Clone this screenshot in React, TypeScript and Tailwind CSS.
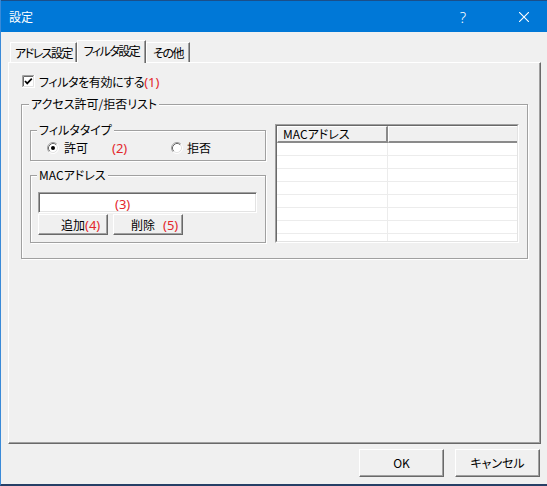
import React from "react";

const raised =
  "border border-t-white border-l-white border-r-[#696969] border-b-[#696969] shadow-[inset_-1px_-1px_0_#a0a0a0]";
const group =
  "relative border border-[#a0a0a0] shadow-[inset_1px_1px_0_#fff,1px_1px_0_#fff]";
const legend =
  "absolute -top-[8px] bg-[#f0f0f0] px-[2px] leading-[14px] whitespace-nowrap";
const red = "text-[#e3262b] font-['Noto_Sans',sans-serif] text-[13px] leading-[14px]";
const tabText = "text-[12px] tracking-[-1.5px]";

function CheckBox() {
  return (
    <svg width="13" height="13" viewBox="0 0 13 13" className="shrink-0">
      <rect x="0" y="0" width="13" height="13" fill="#fff" />
      <path d="M0.5 12V0.5H12" fill="none" stroke="#a0a0a0" />
      <path d="M1.5 11V1.5H11" fill="none" stroke="#696969" />
      <path d="M0 12.5H12.5V0" fill="none" stroke="#fff" />
      <path d="M1 11.5H11.5V1" fill="none" stroke="#e3e3e3" />
      <path d="M3 6L5.2 8.4L9.8 3.6" fill="none" stroke="#000" strokeWidth="1.7" />
    </svg>
  );
}

function Radio({ checked }: { checked?: boolean }) {
  return (
    <svg width="12" height="12" viewBox="0 0 12 12" className="shrink-0">
      <circle cx="6" cy="6" r="5" fill="#fff" />
      <path d="M2.11 9.89A5.5 5.5 0 0 1 9.89 2.11" fill="none" stroke="#a0a0a0" />
      <path d="M9.89 2.11A5.5 5.5 0 0 1 2.11 9.89" fill="none" stroke="#ffffff" />
      <path d="M2.82 9.18A4.5 4.5 0 0 1 9.18 2.82" fill="none" stroke="#696969" />
      <path d="M9.18 2.82A4.5 4.5 0 0 1 2.82 9.18" fill="none" stroke="#e3e3e3" />
      {checked && <circle cx="6" cy="6" r="2" fill="#000" />}
    </svg>
  );
}

export default function App() {
  const rows = [0, 1, 2, 3, 4, 5, 6, 7];
  return (
    <div className="w-[547px] h-[486px] bg-[#f0f0f0] flex flex-col border-l border-l-[#3a8ad8] border-b-2 border-b-[#263f66] overflow-hidden whitespace-nowrap text-[12px] leading-[14px] text-black font-['Noto_Sans_CJK_JP',sans-serif] [font-feature-settings:'palt']">
      {/* title bar */}
      <div className="h-[32px] shrink-0 bg-[#0078d7] border-t border-t-[#1a4f8a] flex items-center text-white">
        <span className="ml-[8px]">設定</span>
        <span className="ml-auto mr-[35px] font-['Noto_Sans',sans-serif] text-[15px] leading-[16px] font-light">?</span>
        <div className="w-[46px] h-full flex items-center justify-center">
          <svg width="10" height="10" viewBox="0 0 10 10">
            <path d="M0 0L10 10M10 0L0 10" stroke="#fff" strokeWidth="1.1" />
          </svg>
        </div>
      </div>

      {/* body */}
      <div className="flex-1 flex flex-col pl-[7px] pr-[6px] pt-[8px]">
        {/* tabs */}
        <div className="h-[22px] shrink-0 flex items-end pl-[2px]">
          <div className={`w-[67px] h-[20px] border-t border-l border-white border-r border-r-[#696969] shadow-[inset_-1px_0_0_#a0a0a0] flex items-center justify-center ${tabText}`}>
            アドレス設定
          </div>
          <div className={`w-[69px] h-[23px] -mb-px relative z-10 bg-[#f0f0f0] border-t border-l border-white border-r border-r-[#696969] shadow-[inset_-1px_0_0_#a0a0a0] flex justify-center pt-[3px] ${tabText}`}>
            フィルタ設定
          </div>
          <div className={`w-[44px] h-[20px] border-t border-l border-white border-r border-r-[#696969] shadow-[inset_-1px_0_0_#a0a0a0] flex items-center justify-center ${tabText}`}>
            その他
          </div>
        </div>

        {/* panel */}
        <div className={`h-[382px] shrink-0 ${raised} flex flex-col pl-[12px] pt-[12px]`}>
          <div className="h-[13px] flex items-center pl-[1px]">
            <CheckBox />
            <span className="ml-[4px] tracking-[-0.4px]">フィルタを有効にする</span>
            <span className={red}>(1)</span>
          </div>

          <div className={`${group} mt-[16px] w-[507px] h-[155px] flex items-start pl-[8px] pt-[19px]`}>
            <span className={`${legend} left-[7px]`}>アクセス許可/拒否リスト</span>

            <div className="w-[236px] mt-[6px] flex flex-col">
              <div className={`${group} h-[31px] flex items-start pl-[16px] pt-[11px]`}>
                <span className={`${legend} left-[6px]`}>フィルタタイプ</span>
                <div className="flex items-center h-[12px]">
                  <Radio checked />
                  <span className="ml-[5px] w-[48px]">許可</span>
                  <span className={`${red} w-[59px]`}>(2)</span>
                  <Radio />
                  <span className="ml-[4px]">拒否</span>
                </div>
              </div>

              <div className={`${group} mt-[14px] h-[68px] flex flex-col pl-[7px] pt-[16px]`}>
                <span className={`${legend} left-[6px]`}>MACアドレス</span>
                <div className="w-[219px] h-[21px] bg-white border border-t-[#a0a0a0] border-l-[#a0a0a0] border-r-white border-b-white shadow-[inset_1px_1px_0_#696969,inset_-1px_-1px_0_#e3e3e3] flex items-center pl-[76px] pt-[3px]">
                  <span className={red}>(3)</span>
                </div>
                <div className="mt-[1px] flex gap-[5px]">
                  <div className={`w-[70px] h-[21px] ${raised} flex items-center pl-[22px]`}>
                    <span>追加</span>
                    <span className={red}>(4)</span>
                  </div>
                  <div className={`w-[70px] h-[21px] ${raised} flex items-center pl-[17px]`}>
                    <span>削除</span>
                    <span className={`${red} ml-[8px]`}>(5)</span>
                  </div>
                </div>
              </div>
            </div>

            {/* list view */}
            <div className="ml-[9px] w-[244px] h-[119px] border border-t-[#a0a0a0] border-l-[#a0a0a0] border-r-white border-b-white">
              <div className="w-full h-full border border-t-[#696969] border-l-[#696969] border-r-[#e3e3e3] border-b-[#e3e3e3] bg-white overflow-hidden flex flex-col">
                <div className="h-[17px] shrink-0 flex bg-[#f0f0f0]">
                  <div className="w-[111px] border-t border-l border-white border-r-2 border-r-[#8a8a8a] border-b-2 border-b-[#8a8a8a] flex items-center pl-[5px]">
                    MACアドレス
                  </div>
                  <div className="flex-1 border-t border-l border-white border-b-2 border-b-[#8a8a8a]" />
                </div>
                {rows.map((r) => (
                  <div key={r} className="h-[13px] shrink-0 flex border-b border-b-[#ececec]">
                    <div className="w-[111px] border-r border-r-[#ececec]" />
                    <div className="flex-1" />
                  </div>
                ))}
              </div>
            </div>
          </div>
        </div>

        {/* footer */}
        <div className="mt-[5px] flex justify-end gap-[11px] pr-[1px]">
          <div className={`w-[85px] h-[28px] ${raised} flex items-center justify-center`}>OK</div>
          <div className={`w-[85px] h-[28px] ${raised} flex items-center justify-center`}>キャンセル</div>
        </div>
      </div>
    </div>
  );
}
